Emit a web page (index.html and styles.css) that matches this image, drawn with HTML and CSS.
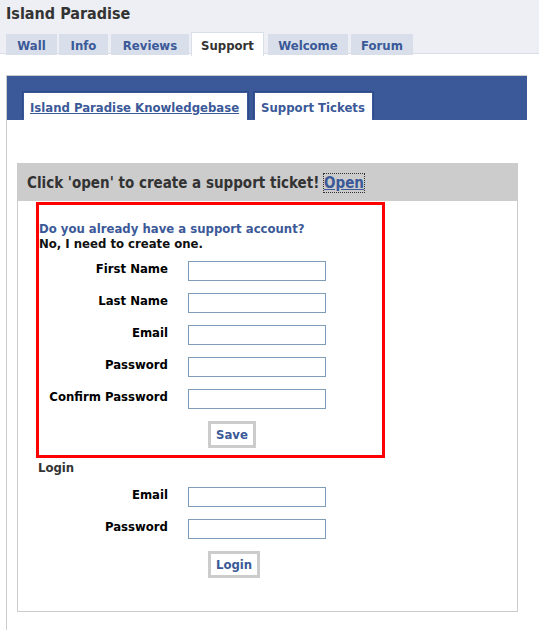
FILE: index.html
```html
<!DOCTYPE html>
<html>
<head>
<meta charset="utf-8">
<link rel="stylesheet" href="styles.css">
</head>
<body>
<div class="top">
  <h1 class="title">Island Paradise</h1>
  <ul class="tabs">
    <li class="tab t-wall">Wall</li>
    <li class="tab t-info">Info</li>
    <li class="tab t-reviews">Reviews</li>
    <li class="tab t-support active">Support</li>
    <li class="tab t-welcome">Welcome</li>
    <li class="tab t-forum">Forum</li>
  </ul>
</div>
<div class="main">
  <div class="bluebar">
    <a class="subtab link" href="#">Island Paradise Knowledgebase</a>
    <span class="subtab">Support Tickets</span>
  </div>
  <div class="panel">
    <div class="panel-head">Click 'open' to create a support ticket! <a class="open" href="#">Open</a></div>
    <div class="panel-body">
      <div class="register">
        <div class="question">Do you already have a support account?</div>
        <div class="answer">No, I need to create one.</div>
        <div class="form">
          <div class="row"><span class="label">First Name</span><span class="input"></span></div>
          <div class="row"><span class="label">Last Name</span><span class="input"></span></div>
          <div class="row"><span class="label">Email</span><span class="input"></span></div>
          <div class="row"><span class="label">Password</span><span class="input"></span></div>
          <div class="row"><span class="label">Confirm Password</span><span class="input"></span></div>
          <div class="btnrow"><span class="button">Save</span></div>
        </div>
      </div>
      <div class="login">
        <div class="login-head">Login</div>
        <div class="form">
          <div class="row"><span class="label">Email</span><span class="input"></span></div>
          <div class="row"><span class="label">Password</span><span class="input"></span></div>
          <div class="btnrow"><span class="button">Login</span></div>
        </div>
      </div>
    </div>
  </div>
</div>
</body>
</html>
```
FILE: styles.css
```css
html, body {
  margin: 0;
  padding: 0;
  background: #fff;
  font-family: "DejaVu Sans Condensed", "DejaVu Sans", sans-serif;
}
.top {
  background: #edeff4;
  border-bottom: 1px solid #d8dfea;
  height: 54px;
  box-sizing: border-box;
  padding: 4px 0 0 6px;
}
.title {
  margin: 0;
  font-size: 16px;
  font-weight: bold;
  color: #333;
  line-height: 20px;
  height: 28px;
}
.tabs {
  list-style: none;
  margin: 0;
  padding: 0;
  display: flex;
  align-items: flex-end;
}
.tab {
  background: #d8dfea;
  color: #3b5998;
  font-weight: bold;
  font-size: 13px;
  height: 21px;
  line-height: 23px;
  text-align: center;
  box-sizing: border-box;
  margin-right: 2px;
}
.t-wall { width: 51px; }
.t-info { width: 49px; margin-right: 3px; }
.t-reviews { width: 78px; }
.t-support { width: 73px; }
.t-welcome { width: 80px; margin-right: 3px; }
.t-forum { width: 62px; }
.tab.active {
  background: #fff;
  color: #333;
  border: 1px solid #d8dfea;
  border-bottom: none;
  height: 24px;
  margin-bottom: -1px;
  line-height: 25px;
  margin-right: 4px;
}
.main {
  margin: 21px 12px 0 6px;
  border-left: 1px solid #ccc;
  min-height: 555px;
}
.bluebar {
  background: #3b5998;
  border-top: 1px solid #ccc;
  height: 44px;
  display: flex;
  align-items: flex-end;
  gap: 6px;
  padding-left: 16px;
}
.subtab {
  background: #fff;
  border: 1px solid #3b5998;
  border-bottom: none;
  box-shadow: -1px -1px 0 #2d4a88, 1px -1px 0 #2d4a88;
  height: 27px;
  line-height: 30px;
  padding: 0 7px 0 6px;
  font-size: 13px;
  font-weight: bold;
  color: #3b5998;
  text-decoration: none;
}
.subtab.link {
  text-decoration: underline;
  padding-right: 8px;
}
.panel {
  margin: 43px 0 0 10px;
  width: 501px;
  border: 1px solid #ccc;
  box-sizing: border-box;
  height: 449px;
}
.panel-head {
  background: #ccc;
  height: 37px;
  line-height: 38px;
  padding-left: 9px;
  font-size: 15px;
  font-weight: bold;
  color: #333;
}
.open {
  color: #3b5998;
  outline: 1px dotted #333;
}
.panel-body {
  padding: 1px 0 0 18px;
}
.register {
  width: 349px;
  height: 256px;
  border: 3px solid #f00;
  padding: 16px 0 0 0;
  box-sizing: border-box;
}
.question {
  color: #3b5998;
  font-size: 13px;
  font-weight: bold;
  line-height: 15px;
}
.answer {
  color: #111;
  font-size: 13px;
  font-weight: bold;
  line-height: 15px;
}
.form {
  padding-top: 10px;
}
.row {
  display: grid;
  grid-template-columns: 129px 138px;
  column-gap: 20px;
  height: 20px;
  margin-bottom: 12px;
}
.label {
  text-align: right;
  font-size: 13px;
  font-weight: bold;
  color: #000;
  line-height: 15px;
}
.input {
  border: 1px solid #7f9db9;
  height: 20px;
  box-sizing: border-box;
  background: #fff;
}
.btnrow {
  padding-left: 169px;
  height: 27px;
}
.button {
  display: block;
  width: fit-content;
  border: 3px solid #ccc;
  background: #fff;
  color: #3b5998;
  font-size: 13px;
  font-weight: bold;
  height: 27px;
  line-height: 22px;
  padding: 0 5px;
  box-sizing: border-box;
}
.login {
  padding-top: 2px;
}
.login-head {
  font-size: 13px;
  font-weight: bold;
  color: #333;
  line-height: 15px;
  padding-left: 2px;
}
.login .form {
  padding-top: 12px;
  padding-left: 3px;
}
```
